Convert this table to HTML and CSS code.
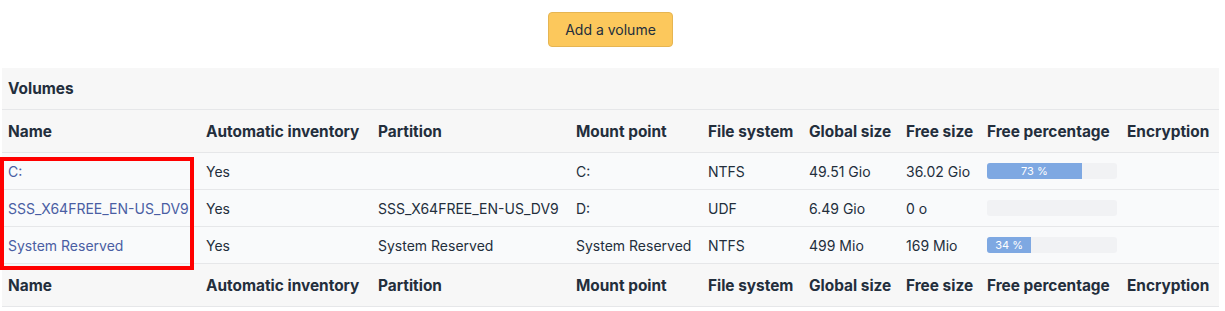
FILE: index.html
```html
<!DOCTYPE html>
<html lang="en">
<head>
    <meta charset="UTF-8">
    <title>Volumes</title>
    <link rel="stylesheet" href="styles.css">
</head>
<body>
    <div class="page">
        <div class="actions">
            <button type="button" class="btn-add">Add a volume</button>
        </div>

        <table class="volumes">
            <colgroup>
                <col style="width: 198px">
                <col style="width: 172px">
                <col style="width: 198px">
                <col style="width: 132px">
                <col style="width: 101px">
                <col style="width: 97px">
                <col style="width: 81px">
                <col style="width: 140px">
                <col style="width: 98px">
            </colgroup>
            <thead>
                <tr class="caption-row">
                    <th colspan="9">Volumes</th>
                </tr>
                <tr class="head-row">
                    <th>Name</th>
                    <th>Automatic inventory</th>
                    <th>Partition</th>
                    <th>Mount point</th>
                    <th>File system</th>
                    <th>Global size</th>
                    <th>Free size</th>
                    <th>Free percentage</th>
                    <th>Encryption</th>
                </tr>
            </thead>
            <tbody>
                <tr>
                    <td><a href="#">C:</a></td>
                    <td>Yes</td>
                    <td></td>
                    <td>C:</td>
                    <td>NTFS</td>
                    <td>49.51 Gio</td>
                    <td>36.02 Gio</td>
                    <td><div class="progress"><div class="progress-bar" style="width: 73%">73 %</div></div></td>
                    <td></td>
                </tr>
                <tr>
                    <td><a href="#">SSS_X64FREE_EN-US_DV9</a></td>
                    <td>Yes</td>
                    <td>SSS_X64FREE_EN-US_DV9</td>
                    <td>D:</td>
                    <td>UDF</td>
                    <td>6.49 Gio</td>
                    <td>0 o</td>
                    <td><div class="progress"><div class="progress-bar" style="width: 0%"></div></div></td>
                    <td></td>
                </tr>
                <tr>
                    <td><a href="#">System Reserved</a></td>
                    <td>Yes</td>
                    <td>System Reserved</td>
                    <td>System Reserved</td>
                    <td>NTFS</td>
                    <td>499 Mio</td>
                    <td>169 Mio</td>
                    <td><div class="progress"><div class="progress-bar" style="width: 34%">34 %</div></div></td>
                    <td></td>
                </tr>
            </tbody>
            <tfoot>
                <tr class="head-row">
                    <th>Name</th>
                    <th>Automatic inventory</th>
                    <th>Partition</th>
                    <th>Mount point</th>
                    <th>File system</th>
                    <th>Global size</th>
                    <th>Free size</th>
                    <th>Free percentage</th>
                    <th>Encryption</th>
                </tr>
            </tfoot>
        </table>

        <!-- highlight around the name column -->
        <div class="highlight"></div>
    </div>
</body>
</html>
```

FILE: styles.css
```css
body {
    margin: 0;
    font-family: Inter, "Noto Sans", sans-serif;
    font-size: 14px;
    color: #232e3c;
    background: #fff;
}
.page {
    position: relative;
    padding: 0 6px 0 2px;
}
.actions {
    display: flex;
    justify-content: center;
    padding: 12px 0 21px;
}
.btn-add {
    font-family: inherit;
    font-size: 14px;
    color: #232e3c;
    background-color: #fcc85c;
    border: 1px solid #e6b552;
    border-radius: 4px;
    width: 125px;
    height: 35px;
    padding: 0;
    cursor: pointer;
}
.volumes {
    width: 1217px;
    border-collapse: collapse;
    table-layout: fixed;
}
.volumes th,
.volumes td {
    text-align: left;
    padding: 0 6px;
    white-space: nowrap;
}
.caption-row th {
    background: #f7f7f7;
    height: 41px;
    font-size: 15.4px;
    font-weight: 700;
    border-bottom: 1px solid #e6e7e9;
}
.head-row th {
    background: #f7f7f7;
    height: 42px;
    font-size: 15.4px;
    font-weight: 700;
    border-bottom: 1px solid #e6e7e9;
}
.volumes tbody td {
    background: #f9fafb;
    height: 36px;
    border-bottom: 1px solid #e6e7e9;
}
.volumes a {
    color: #4a5ea3;
    text-decoration: none;
}
.progress {
    width: 130px;
    height: 16px;
    background: #f1f2f4;
    border-radius: 3px;
    overflow: hidden;
}
.progress-bar {
    height: 100%;
    background: #7ea8e2;
    color: #fff;
    font-size: 11px;
    line-height: 16px;
    text-align: center;
}
.highlight {
    position: absolute;
    left: 0;
    top: 157px;
    width: 186px;
    height: 105px;
    border: 4px solid #f00;
}
```
